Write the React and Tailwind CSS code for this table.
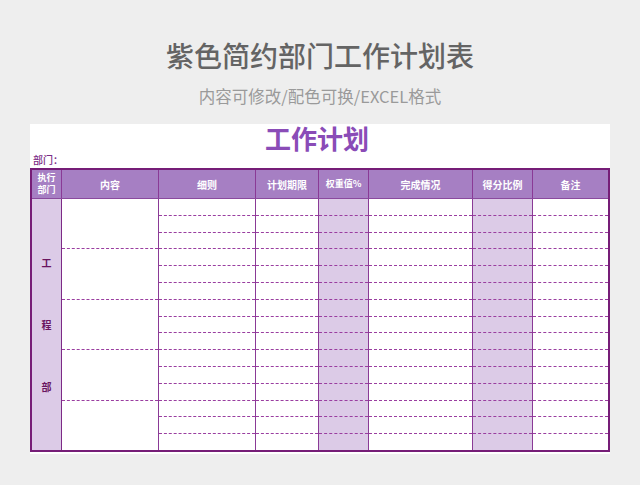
import React from "react";

const cols = [
  { key: "c3", w: "w-[97px]", shade: false },
  { key: "c4", w: "w-[63px]", shade: false },
  { key: "c5", w: "w-[50px]", shade: true },
  { key: "c6", w: "w-[104px]", shade: false },
  { key: "c7", w: "w-[60px]", shade: true },
  { key: "c8", w: "w-[75px]", shade: false, last: true },
];

const rows = Array.from({ length: 15 }, (_, i) => i);
const groups = Array.from({ length: 5 }, (_, i) => i);

export default function App() {
  return (
    <div
      className="w-[640px] h-[485px] bg-[#eeeeee] overflow-hidden"
      style={{ fontFamily: '"Noto Sans CJK SC", "Noto Sans", sans-serif' }}
    >
      <div className="pt-[41px] text-center text-[28px] leading-[28px] font-medium text-[#646464]">
        紫色简约部门工作计划表
      </div>
      <div className="mt-[17px] text-center text-[16.5px] leading-[20px] text-[#9a9a9a]">
        内容可修改/配色可换/EXCEL格式
      </div>
      <div className="mt-[18px] mx-[30px] w-[580px] bg-white pb-[2px]">
        <div className="h-[27px] leading-[27px] text-center pr-[6px] text-[26px] font-bold text-[#8a4cb7]">
          工作计划
        </div>
        <div className="h-[17px] leading-[17px] pl-[3px] text-[10px] font-medium text-[#7b2b86]">
          部门：
        </div>
        <div className="border-2 border-[#761d77]">
          {/* header */}
          <div className="flex h-[29px] bg-[#a67fc3] border-b border-[#8a4a9e] text-white font-bold text-[10px]">
            <div className="w-[30px] border-r border-[#8a3a96] flex items-center justify-center text-center text-[9px] leading-[12px]">
              执行
              <br />
              部门
            </div>
            <div className="w-[97px] border-r border-[#8a3a96] flex items-center justify-center">内容</div>
            <div className="w-[97px] border-r border-[#8a3a96] flex items-center justify-center">细则</div>
            <div className="w-[63px] border-r border-[#8a3a96] flex items-center justify-center">计划期限</div>
            <div className="w-[50px] border-r border-[#8a3a96] flex items-center justify-center text-[9px]">权重值%</div>
            <div className="w-[104px] border-r border-[#8a3a96] flex items-center justify-center">完成情况</div>
            <div className="w-[60px] border-r border-[#8a3a96] flex items-center justify-center">得分比例</div>
            <div className="flex-1 flex items-center justify-center">备注</div>
          </div>
          {/* body */}
          <div className="flex h-[251px]">
            <div className="w-[30px] bg-[#dccbe7] border-r border-[#7d2a86] flex flex-col items-center justify-center text-[10px] font-bold text-[#6a1460]">
              <div className="h-[62px] leading-[62px]">工</div>
              <div className="h-[62px] leading-[62px]">程</div>
              <div className="h-[62px] leading-[62px]">部</div>
            </div>
            <div className="w-[97px] border-r border-[#8a3a96] flex flex-col">
              {groups.map((g) => (
                <div
                  key={g}
                  className={
                    "flex-1 " +
                    (g < 4 ? "border-b border-dashed border-[#9a3ea0]" : "")
                  }
                />
              ))}
            </div>
            {cols.map((c) => (
              <div
                key={c.key}
                className={
                  (c.last ? "flex-1 " : c.w + " border-r border-[#8a3a96] ") +
                  "flex flex-col " +
                  (c.shade ? "bg-[#dccbe7]" : "bg-white")
                }
              >
                {rows.map((r) => (
                  <div
                    key={r}
                    className={
                      "flex-1 " +
                      (r < 14 ? "border-b border-dashed border-[#9a3ea0]" : "")
                    }
                  />
                ))}
              </div>
            ))}
          </div>
        </div>
      </div>
    </div>
  );
}
